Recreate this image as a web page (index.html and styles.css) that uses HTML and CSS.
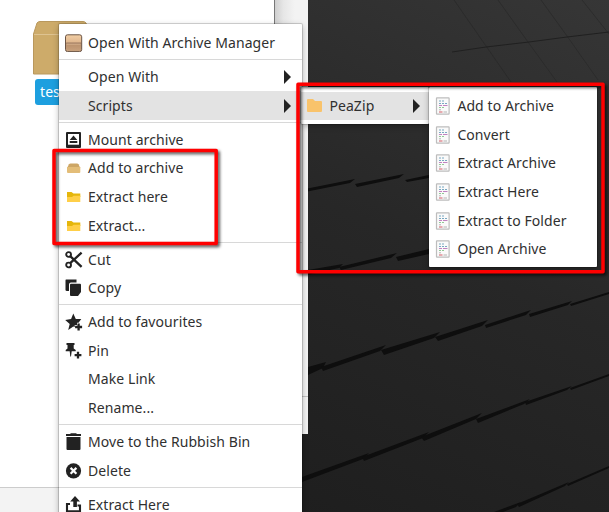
FILE: index.html
```html
<!DOCTYPE html>
<html lang="en">
<head>
<meta charset="utf-8">
<title>Desktop</title>
<link rel="stylesheet" href="styles.css">
</head>
<body>
<div class="desktop">
  <svg class="wallpaper" viewBox="0 0 609 512" width="609" height="512">
    <defs>
      <linearGradient id="bg" x1="0.45" y1="1" x2="1" y2="0"><stop offset="0" stop-color="#1e1e1e"/><stop offset=".5" stop-color="#272727"/><stop offset="1" stop-color="#363636"/></linearGradient>
    </defs>
    <rect width="609" height="512" fill="url(#bg)"/>
    <g fill="none" stroke="#242424" stroke-width="1">
      <path d="M454 0L486 46 511 82M498 0L528 42 557 82M541 0L567 36 598 80M582 0L609 34" opacity=".5"/>
      <path d="M452 52L486 47 529 42 567 37 609 32" stroke="#202020"/>
    </g>
    <g fill="#0e0e0e">
      <path d="M300 190L355 179 350 183 300 193Z"/>
      <path d="M355 184L404 174 399 178 357 187Z"/>
      <path d="M405 180L429 175V178L407 182Z"/>
      <path d="M302 271L343 264 339 268 302 276Z"/>
      <path d="M339 267L397 253 391 258 341 270Z"/>
      <path d="M396 257L429 249V254L398 261Z"/>
      <path d="M308 367L326 362 323 368 308 375Z"/>
      <path d="M321 367L386 345 380 351 323 371Z"/>
      <path d="M381 350L440 332 434 338 384 355Z"/>
      <path d="M435 337L488 320 482 326 438 341Z"/>
      <path d="M485 325L531 310 526 315 486 328Z"/>
      <path d="M529 314L572 301 568 305 530 317Z"/>
      <path d="M570 304L609 292V294L571 306Z"/>
      <path d="M302 477L369 453 363 459 302 482Z"/>
      <path d="M362 457L429 432 423 438 364 461Z"/>
      <path d="M421 437L482 413 476 419 424 441Z"/>
      <path d="M476 419L530 399 524 404 478 423Z"/>
      <path d="M525 402L572 386 567 390 526 405Z"/>
      <path d="M570 388L609 374V376L571 390Z"/>
      <path d="M494 512L521 502 516 507 503 512Z"/>
      <path d="M517 504L569 482 565 486 519 507Z"/>
      <path d="M567 484L609 466V468L568 486Z"/>
    </g>
  </svg>

  <div class="window main-window"><div class="window-pane"></div><div class="window-side"></div></div>
  <div class="window lower-window"></div>
  <div class="window-foot"></div>

  <div class="file">
    <svg width="57" height="54" viewBox="0 0 57 54"><path d="M.5 53V13L4 2Q5 .5 7 .5H50Q52 .5 53 2L57 13V53Z" fill="#cdab6a" stroke="#b9985d"/><path d="M1 13.5H57" stroke="#dec391"/></svg>
    <span class="file-name">test.zip</span>
  </div>

  <nav class="menu context">
    <div class="item"><svg class="icon" viewBox="0 0 18 18"><defs><linearGradient id="bx" x2="0" y2="1"><stop stop-color="#f2cfa5"/><stop offset=".48" stop-color="#dfb58c"/><stop offset=".52" stop-color="#b98f6b"/><stop offset="1" stop-color="#c9a27e"/></linearGradient></defs><rect x=".5" y=".8" width="16.2" height="16.8" rx="2" fill="url(#bx)" stroke="#6b5445"/><path d="M1.2 9.1H16.2" stroke="#8d6c54"/><path d="M1.5 10.1H15.7" stroke="#e5c3a2" stroke-width=".7"/></svg><span>Open With Archive Manager</span></div>
    <hr>
    <div class="item"><i class="icon"></i><span>Open With</span><b class="arrow"></b></div>
    <div class="item active"><i class="icon"></i><span>Scripts</span><b class="arrow"></b></div>
    <hr>
    <div class="item"><svg class="icon" viewBox="0 0 18 18"><path d="M2 2H15V16H2Z" fill="none" stroke="#222" stroke-width="2" stroke-linejoin="round"/><path d="M2 15H15" stroke="#222" stroke-width="2.6"/><path d="M8.5 4.5L12.3 9H4.7ZM4.7 10H12.3V12H4.7Z" fill="#222"/></svg><span>Mount archive</span></div>
    <div class="item"><svg class="icon" viewBox="0 0 18 18"><path d="M2 9L4 5.2Q4.5 4.5 5.5 4.5H12Q13 4.5 13.5 5.2L15.3 9Z" fill="#cda665"/><path d="M2 8H15.3V13Q15.3 14 14.3 14H3Q2 14 2 13Z" fill="#e3bd78"/></svg><span>Add to archive</span></div>
    <div class="item"><svg class="icon" viewBox="0 0 18 18"><path d="M2 4H6.5L8.5 5.5H15.3V9H2Z" fill="#e5b60c"/><path d="M2 9H7L8.5 7.8H15.3V14H2Z" fill="#ffcf48"/></svg><span>Extract here</span></div>
    <div class="item"><svg class="icon" viewBox="0 0 18 18"><path d="M2 4H6.5L8.5 5.5H15.3V9H2Z" fill="#e5b60c"/><path d="M2 9H7L8.5 7.8H15.3V14H2Z" fill="#ffcf48"/></svg><span>Extract...</span></div>
    <hr>
    <div class="item"><svg class="icon" viewBox="0 0 18 18"><g fill="none" stroke="#222"><circle cx="3.6" cy="3.5" r="2.4" stroke-width="1.9"/><circle cx="3.6" cy="14" r="2.4" stroke-width="1.9"/><path d="M5.2 5.2L16.6 15.9M5.2 12.2L16.6 1.6" stroke-width="2.3"/></g></svg><span>Cut</span></div>
    <div class="item"><svg class="icon" viewBox="0 0 18 18"><path d="M1 .5H11.5V3.5H6Q4 3.5 4 5.5V12H2Q.5 12 .5 11V1.5Q.5.5 1 .5Z" fill="#222"/><path d="M6 4.7H15Q16 4.7 16 5.7V13L13 17H6Q5 17 5 16V5.7Q5 4.7 6 4.7Z" fill="#222"/></svg><span>Copy</span></div>
    <hr>
    <div class="item"><svg class="icon" viewBox="0 0 18 18"><path d="M8.3 .5L10.8 6H16.3L13.5 9.8H12V12H9.7V14L8.3 13.6 3.2 17 4.7 11 .2 7 6.1 6Z" fill="#222"/><path d="M13.6 10.5V17.5M10.1 14H17.1" stroke="#222" stroke-width="2.3"/></svg><span>Add to favourites</span></div>
    <div class="item"><svg class="icon" viewBox="0 0 18 18"><path d="M1.5 1H9.5V3H8.7V6.5L10.7 8V9.3H6.7L6 14.5H5.3L4.7 9.3H.7V8L2.5 6.5V3H1.5Z" fill="#222"/><path d="M13 9.8V16.6M9.6 13.2H16.4" stroke="#222" stroke-width="2.3"/></svg><span>Pin</span></div>
    <div class="item"><i class="icon"></i><span>Make Link</span></div>
    <div class="item"><i class="icon"></i><span>Rename...</span></div>
    <hr>
    <div class="item"><svg class="icon" viewBox="0 0 18 18"><path d="M1 1H5.5V.3H11.5V1H16V3H1ZM1.5 4H15.5V16Q15.5 17 14.5 17H2.5Q1.5 17 1.5 16Z" fill="#222"/></svg><span>Move to the Rubbish Bin</span></div>
    <div class="item"><svg class="icon" viewBox="0 0 18 18"><circle cx="8.5" cy="8.8" r="7.6" fill="#222"/><path d="M5.6 5.9L11.4 11.7M11.4 5.9L5.6 11.7" stroke="#fff" stroke-width="2.2"/></svg><span>Delete</span></div>
    <hr>
    <div class="item"><svg class="icon" viewBox="0 0 18 18"><path d="M5 8H2V15.2H15V9.5H12.5" fill="none" stroke="#222" stroke-width="2.1"/><path d="M10 0L15 5.5H11.9V11H8.3V5.5H5.2Z" fill="#222"/></svg><span>Extract Here</span></div>
  </nav>

  <nav class="menu scripts">
    <div class="item active"><svg class="icon" viewBox="0 0 18 18"><path d="M0 3Q0 2 1 2H6L8 4H14Q15 4 15 5V14Q15 15 14 15H1Q0 15 0 14Z" fill="#f9c36b"/></svg><span>PeaZip</span><b class="arrow"></b></div>
  </nav>

  <svg width="0" height="0" class="symbols"><symbol id="script" viewBox="0 0 18 18"><rect x="1.5" y=".8" width="12.6" height="16.4" rx=".5" fill="#fafafa" stroke="#bdbdbd" stroke-width="1.2"/><g fill="none"><path d="M4 4H6M7 4H9M4 6.5H6M7 6.5H9M10 6.5H12" stroke="#79a8c2"/><path d="M4 8.5H7M8 8.5H12.5" stroke="#c083c0"/><path d="M4 10.5H6M7 10.5H9" stroke="#91c995"/><path d="M4 12.8H6M8.5 15H12" stroke="#b4b4b4"/><path d="M4 15H7.5" stroke="#d45a65"/></g></symbol></svg>
  <nav class="menu actions">
    <div class="item"><svg class="icon"><use href="#script"/></svg><span>Add to Archive</span></div>
    <div class="item"><svg class="icon"><use href="#script"/></svg><span>Convert</span></div>
    <div class="item"><svg class="icon"><use href="#script"/></svg><span>Extract Archive</span></div>
    <div class="item"><svg class="icon"><use href="#script"/></svg><span>Extract Here</span></div>
    <div class="item"><svg class="icon"><use href="#script"/></svg><span>Extract to Folder</span></div>
    <div class="item"><svg class="icon"><use href="#script"/></svg><span>Open Archive</span></div>
  </nav>

  <svg class="marks" width="609" height="512" viewBox="0 0 609 512"><g fill="none" stroke="#f00" stroke-width="3.5" stroke-linejoin="round"><rect x="54" y="150.5" width="162.2" height="93"/><rect x="298" y="84.3" width="305" height="187.4"/></g></svg>
</div>
</body>
</html>
```

FILE: styles.css
```css
body { margin: 0; }
.desktop {
  position: relative;
  width: 609px;
  height: 512px;
  overflow: hidden;
  background: #242424;
  color: #303030;
  font: 14px/20px "Noto Sans", "Open Sans", sans-serif;
  letter-spacing: .08px;
}
.wallpaper, .marks { position: absolute; inset: 0; display: block; }
.marks { filter: drop-shadow(2px 2px 1.5px rgba(0, 0, 0, .65)); }
.symbols { position: absolute; }
.window { position: absolute; left: 0; top: 0; }
.main-window { width: 308px; height: 434px; display: flex; background: #fff; }
.window-pane { width: 274px; }
.window-side {
  flex: 1;
  background:
    linear-gradient(#c4c4c4, #c4c4c4) 0 396px / 100% 1px no-repeat,
    linear-gradient(90deg, #cfcfcf, #e6e6e6 25%, #f3f3f3 60%);
  border-left: 1px solid #777;
  box-sizing: border-box;
}
.lower-window { top: 434px; width: 100px; height: 53px; background: #fff; }
.window-foot {
  position: absolute;
  left: 0;
  top: 487px;
  width: 100px;
  height: 25px;
  background: #f3f3f3;
  border-top: 1px solid #ccc;
}
.file { position: absolute; left: 33px; top: 21px; width: 58px; }
.file svg { display: block; }
.file-name {
  display: block;
  margin: 4px 0 0 2px;
  padding: 3px 5px;
  border-radius: 3px;
  background: #1d9fdf;
  color: #fff;
}
.menu {
  position: absolute;
  box-sizing: border-box;
  padding: 4.6px 0;
  background: #fff;
  border-radius: 1px;
  box-shadow: 0 0 0 1px rgba(0, 0, 0, .15), 0 2px 6px rgba(0, 0, 0, .3);
}
.context { left: 59px; top: 24px; width: 243px; height: 500px; }
.scripts { left: 301px; top: 87px; width: 128px; height: 37px; }
.actions { left: 429px; top: 87px; width: 168px; height: 180px; }
.item {
  display: flex;
  align-items: center;
  height: 28.67px;
  padding: 0 11px 0 6px;
  white-space: nowrap;
}
.active { background: #e3e3e3; }
.icon { width: 18px; height: 18px; flex: none; margin-right: 5px; }
.actions .icon, .scripts .icon { margin-right: 4.4px; }
.scripts .item { padding-right: 9px; }
.arrow {
  margin-left: auto;
  border-left: 7px solid #222;
  border-top: 7px solid transparent;
  border-bottom: 7px solid transparent;
}
hr {
  height: 1px;
  margin: 2px 0 2.33px;
  border: 0;
  background: #d8d8d8;
}
```
